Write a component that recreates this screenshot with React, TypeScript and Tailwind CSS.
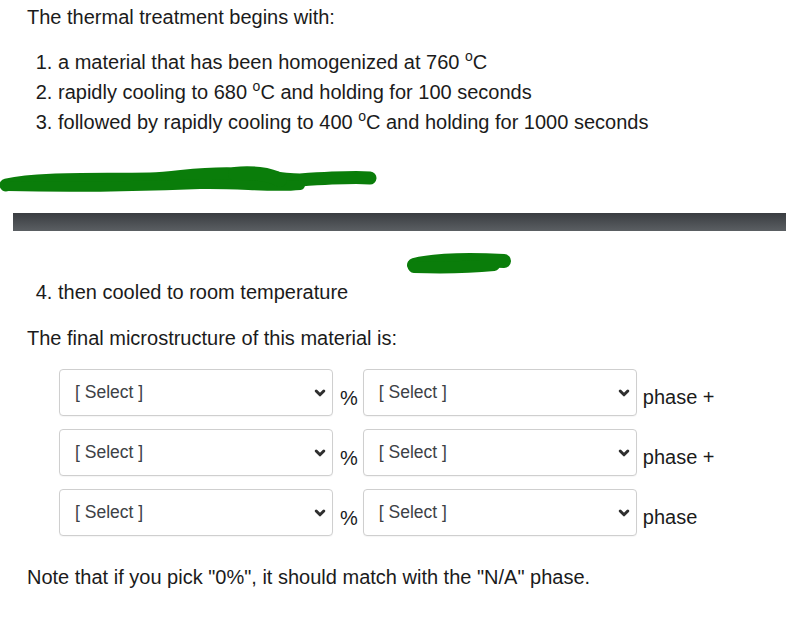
import React from "react";

const Chevron = () => (
  <svg width="12" height="10" viewBox="0 0 12 10" className="shrink-0">
    <polyline points="2.2,3 6,6.8 9.8,3" fill="none" stroke="#2f2f2f" strokeWidth="3" strokeLinecap="round" strokeLinejoin="round" />
  </svg>
);

const Sel = () => (
  <div className="flex h-[47px] w-[274px] items-center justify-between rounded-[4px] border border-[#cfcfcf] bg-white pl-[15px] pr-[6px] shadow-[0_1px_1px_rgba(0,0,0,0.04)]">
    <span className="text-[17.5px] text-[#3d4146]">[ Select ]</span>
    <Chevron />
  </div>
);

const Row = ({ label }: { label: string }) => (
  <div className="flex items-center">
    <Sel />
    <span className="ml-[7px] mr-[5px] mt-[10px] text-[20px]">%</span>
    <Sel />
    <span className="ml-[6px] mt-[8px] text-[20px]">{label}</span>
  </div>
);

const Deg = () => <sup className="relative top-[-8px] text-[14px]">o</sup>;

export default function App() {
  return (
    <div
      className="relative min-h-[617px] w-[786px] overflow-hidden bg-white text-[#1b1b1b]"
      style={{ fontFamily: '"Liberation Sans", Arial, sans-serif' }}
    >
      <div className="pl-[27px] pt-[5px]">
        <p className="text-[20px] leading-[24px]">The thermal treatment begins with:</p>
        <ol className="mt-[18px] list-decimal pl-[31px] text-[20px] leading-[30px]">
          <li>a material that has been homogenized at 760 <Deg />C</li>
          <li>rapidly cooling to 680 <Deg />C and holding for 100 seconds</li>
          <li>followed by rapidly cooling to 400 <Deg />C and holding for 1000 seconds</li>
        </ol>
      </div>

      <svg width="380" height="28" viewBox="0 0 380 28" className="mt-[29px] block">
        <path
          d="M6,19 C40,12 90,14 150,13 C180,12 200,6 240,8 C260,9 280,14 300,14 C330,12 355,11 370,12"
          fill="none"
          stroke="#0a7d0a"
          strokeWidth="13"
          strokeLinecap="round"
        />
        <path d="M8,20 C80,22 150,20 200,18 C240,17 270,22 300,19" fill="none" stroke="#0a7d0a" strokeWidth="10" strokeLinecap="round" />
        <path d="M235,8 C250,6 270,8 280,14" fill="none" stroke="#0a7d0a" strokeWidth="14" strokeLinecap="round" />
      </svg>

      <div className="ml-[13px] mt-[19px] h-[18px] bg-gradient-to-b from-[#3a3d41] to-[#5b5f63]" />

      <svg width="110" height="22" viewBox="0 0 110 22" className="ml-[404px] mt-[22px] block">
        <path d="M10,12 C30,7 60,6 100,8" fill="none" stroke="#0a7d0a" strokeWidth="14" strokeLinecap="round" />
        <path d="M10,14 C40,15 70,14 90,12" fill="none" stroke="#0a7d0a" strokeWidth="12" strokeLinecap="round" />
      </svg>

      <div className="pl-[27px]">
        <ol start={4} className="mt-[2px] list-decimal pl-[31px] text-[20px] leading-[30px]">
          <li>then cooled to room temperature</li>
        </ol>
        <p className="mt-[19px] text-[20px] leading-[24px]">The final microstructure of this material is:</p>

        <div className="ml-[32px] mt-[19px] flex flex-col gap-[13px]">
          <Row label="phase +" />
          <Row label="phase +" />
          <Row label="phase" />
        </div>

        <p className="mt-[29px] text-[20px] leading-[24px]">
          Note that if you pick "0%", it should match with the "N/A" phase.
        </p>
      </div>
    </div>
  );
}
